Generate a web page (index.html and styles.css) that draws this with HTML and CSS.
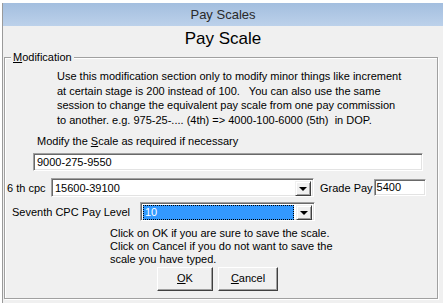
FILE: index.html
```html
<!DOCTYPE html>
<html>
<head>
<meta charset="utf-8">
<link rel="stylesheet" href="styles.css">
</head>
<body>
<div class="window">
  <div class="titlebar">Pay Scales</div>
  <div class="client">
    <div class="heading">Pay Scale</div>
    <div class="group">
      <div class="legend"><u>M</u>odification</div>
      <div class="para">Use this modification section only to modify minor things like increment
at certain stage is 200 instead of 100.   You can also use the same
session to change the equivalent pay scale from one pay commission
to another. e.g. 975-25-.... (4th) =&gt; 4000-100-6000 (5th)  in DOP.</div>
      <div class="row-label">Modify the <u>S</u>cale as required if necessary</div>
      <div class="textbox scale-box">9000-275-9550</div>
      <div class="row cpc-row">
        <span class="lbl">6 th cpc</span>
        <div class="combo cpc-combo">
          <div class="combo-text">15600-39100</div>
          <div class="combo-btn"><span class="arrow"></span></div>
        </div>
        <span class="lbl grade-lbl">Grade Pay</span>
        <div class="textbox grade-box">5400</div>
      </div>
      <div class="row level-row">
        <span class="lbl level-lbl">Seventh CPC Pay Level</span>
        <div class="combo level-combo">
          <div class="combo-text"><span class="sel">10</span></div>
          <div class="combo-btn"><span class="arrow"></span></div>
        </div>
      </div>
      <div class="note">Click on OK if you are sure to save the scale.
Click on Cancel if you do not want to save the
scale you have typed.</div>
      <div class="buttons">
        <div class="btn ok"><u>O</u>K</div>
        <div class="btn cancel"><u>C</u>ancel</div>
      </div>
    </div>
  </div>
</div>
</body>
</html>
```
FILE: styles.css
```css
html, body {
  margin: 0;
  padding: 0;
  background: #ffffff;
}
body {
  width: 446px;
  height: 303px;
  overflow: hidden;
  font-family: "Liberation Sans", Arial, sans-serif;
  font-size: 11px;
  color: #000;
}
.window {
  margin: 3px 0 0 2px;
  width: 441px;
  height: 300px;
  background: #f0f0f0;
  border-left: 1px solid #9a9a9a;
  box-sizing: border-box;
  display: flex;
  flex-direction: column;
}
.titlebar {
  height: 23px;
  line-height: 23px;
  text-align: center;
  font-size: 13px;
  color: #2a2a2a;
  background: linear-gradient(#a3bedf, #bcd1ea);
}
.client {
  flex: 1;
  display: flex;
  flex-direction: column;
}
.heading {
  height: 31px;
  line-height: 26px;
  text-align: center;
  font-size: 17px;
}
.group {
  margin-left: 1px;
  width: 434px;
  height: 242px;
  box-sizing: border-box;
  border: 1px solid #a0a0a0;
  box-shadow: 1px 1px 0 #fff, inset 1px 1px 0 #fff;
  display: flex;
  flex-direction: column;
  position: relative;
}
.legend {
  position: absolute;
  left: 6px;
  top: -8px;
  padding: 0 2px;
  background: #f0f0f0;
  line-height: 14px;
}
.para {
  margin: 11px 0 0 52px;
  white-space: pre;
  line-height: 14.5px;
}
.row-label {
  margin: 7px 0 0 32px;
  line-height: 14px;
}
.textbox {
  box-sizing: border-box;
  background: #fff;
  border-top: 1px solid #a0a0a0;
  border-left: 1px solid #a0a0a0;
  border-right: 1px solid #fff;
  border-bottom: 1px solid #fff;
  box-shadow: inset 1px 1px 0 #696969, inset -1px -1px 0 #e3e3e3;
  padding: 0 3px;
  white-space: nowrap;
}
.scale-box {
  margin: 5px 0 0 28px;
  width: 390px;
  height: 18px;
  line-height: 16px;
}
.row {
  display: flex;
  align-items: center;
}
.cpc-row {
  margin-top: 7px;
}
.lbl {
  white-space: nowrap;
}
.cpc-row .lbl:first-child {
  margin-left: 2px;
  width: 44px;
}
.combo {
  box-sizing: border-box;
  height: 19px;
  background: #fff;
  border-top: 1px solid #a0a0a0;
  border-left: 1px solid #a0a0a0;
  border-right: 1px solid #fff;
  border-bottom: 1px solid #fff;
  box-shadow: inset 1px 1px 0 #696969, inset -1px -1px 0 #e3e3e3;
  display: flex;
  padding: 2px;
}
.combo-text {
  flex: 1;
  line-height: 15px;
  padding-left: 1px;
}
.cpc-combo {
  width: 263px;
}
.combo-btn {
  width: 16px;
  height: 15px;
  box-sizing: border-box;
  background: #f0f0f0;
  border-top: 1px solid #f0f0f0;
  border-left: 1px solid #f0f0f0;
  border-right: 1px solid #404040;
  border-bottom: 1px solid #404040;
  box-shadow: inset 1px 1px 0 #fff, inset -1px -1px 0 #a0a0a0;
  display: flex;
  align-items: center;
  justify-content: center;
}
.arrow {
  width: 0;
  height: 0;
  border-left: 4px solid transparent;
  border-right: 4px solid transparent;
  border-top: 4px solid #000;
  margin-top: 1px;
}
.grade-lbl {
  margin-left: 6px;
}
.grade-box {
  margin-left: 1px;
  width: 52px;
  height: 17px;
  line-height: 15px;
  padding-left: 2px;
}
.level-row {
  margin-top: 5px;
}
.level-lbl {
  margin-left: 7px;
  width: 128px;
}
.level-combo {
  width: 175px;
}
.sel {
  display: block;
  height: 15px;
  box-sizing: border-box;
  background: #3399ff;
  color: #fff;
  outline: 1px dotted #000;
  outline-offset: -1px;
  padding-left: 2px;
  margin-right: 2px;
}
.level-combo .combo-text {
  padding-left: 0;
}
.note {
  margin: 6px 0 0 105px;
  white-space: pre;
  line-height: 13px;
}
.buttons {
  display: flex;
  margin: 1px 0 0 152px;
  gap: 5px;
}
.btn {
  box-sizing: border-box;
  height: 24px;
  line-height: 20px;
  text-align: center;
  background: #f0f0f0;
  border-top: 1px solid #fff;
  border-left: 1px solid #fff;
  border-right: 1px solid #404040;
  border-bottom: 1px solid #404040;
  box-shadow: inset -1px -1px 0 #a0a0a0;
}
.ok {
  width: 56px;
}
.cancel {
  width: 60px;
}
```
